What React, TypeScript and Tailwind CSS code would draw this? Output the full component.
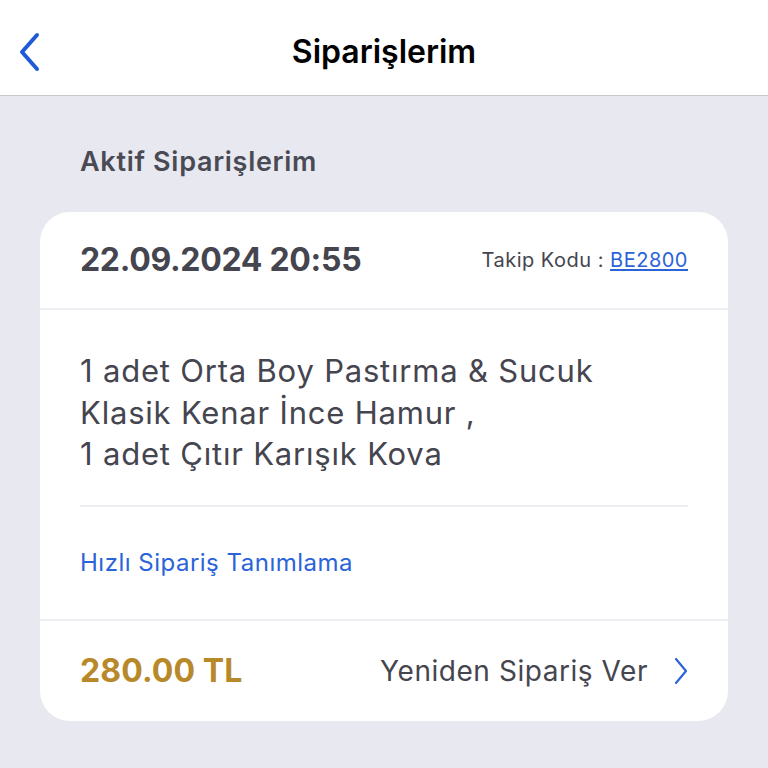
export default function App() {
  return (
    <div className="w-[768px] h-[768px] overflow-hidden bg-[#e8e8f0] font-['Inter',sans-serif]">
      <header className="h-[96px] bg-white border-b border-[#c8c8cc] flex items-center relative">
        <button className="absolute left-[14px] top-[30px] w-[32px] h-[44px] flex items-center justify-center">
          <svg width="26" height="40" viewBox="0 0 26 40" fill="none">
            <path d="M20 3 L5 20 L20 37" stroke="#1f5bd6" strokeWidth="4" strokeLinecap="round" strokeLinejoin="round" />
          </svg>
        </button>
        <h1 className="w-full text-center text-[32px] font-semibold text-black pt-[8px]">
          Siparişlerim
        </h1>
      </header>

      <div className="px-[40px] pt-[48px]">
        <h2 className="px-[40px] text-[27px] font-semibold text-[#4a4a55] leading-[36px] tracking-[0.7px]">Aktif Siparişlerim</h2>

        <div className="mt-[32px] bg-white rounded-[30px] overflow-hidden">
          <div className="h-[98px] px-[40px] flex items-center justify-between border-b-2 border-[#eeeef2]">
            <span className="text-[32px] font-bold text-[#45454f] tracking-[-0.3px]">22.09.2024 20:55</span>
            <span className="text-[20px] text-[#45454f] tracking-[0.5px]">
              Takip Kodu : <span className="text-[#2b63d9] underline underline-offset-2">BE2800</span>
            </span>
          </div>

          <div className="px-[40px] pt-[40px]">
            <p className="text-[31px] leading-[41.5px] text-[#45454f] tracking-[0.8px]">
              1 adet Orta Boy Pastırma &amp; Sucuk
              <br />
              Klasik Kenar İnce Hamur ,
              <br />
              1 adet Çıtır Karışık Kova
            </p>
            <div className="mt-[30px] border-b-2 border-[#eeeef2]" />
            <div className="h-[112px] flex items-center">
              <span className="text-[24px] text-[#2b63d9] tracking-[0.5px]">Hızlı Sipariş Tanımlama</span>
            </div>
          </div>

          <div className="h-[102px] px-[40px] flex items-center justify-between border-t-2 border-[#eeeef2]">
            <span className="text-[32px] font-bold text-[#b8892a] tracking-[0.1px]">280.00 TL</span>
            <div className="flex items-center gap-[26px]">
              <span className="text-[28px] text-[#45454f] tracking-[0.55px]">Yeniden Sipariş Ver</span>
              <svg width="14" height="28" viewBox="0 0 14 28" fill="none">
                <path d="M2 2 L12 14 L2 26" stroke="#2b63d9" strokeWidth="2.2" strokeLinecap="round" strokeLinejoin="round" />
              </svg>
            </div>
          </div>
        </div>
      </div>
    </div>
  );
}
